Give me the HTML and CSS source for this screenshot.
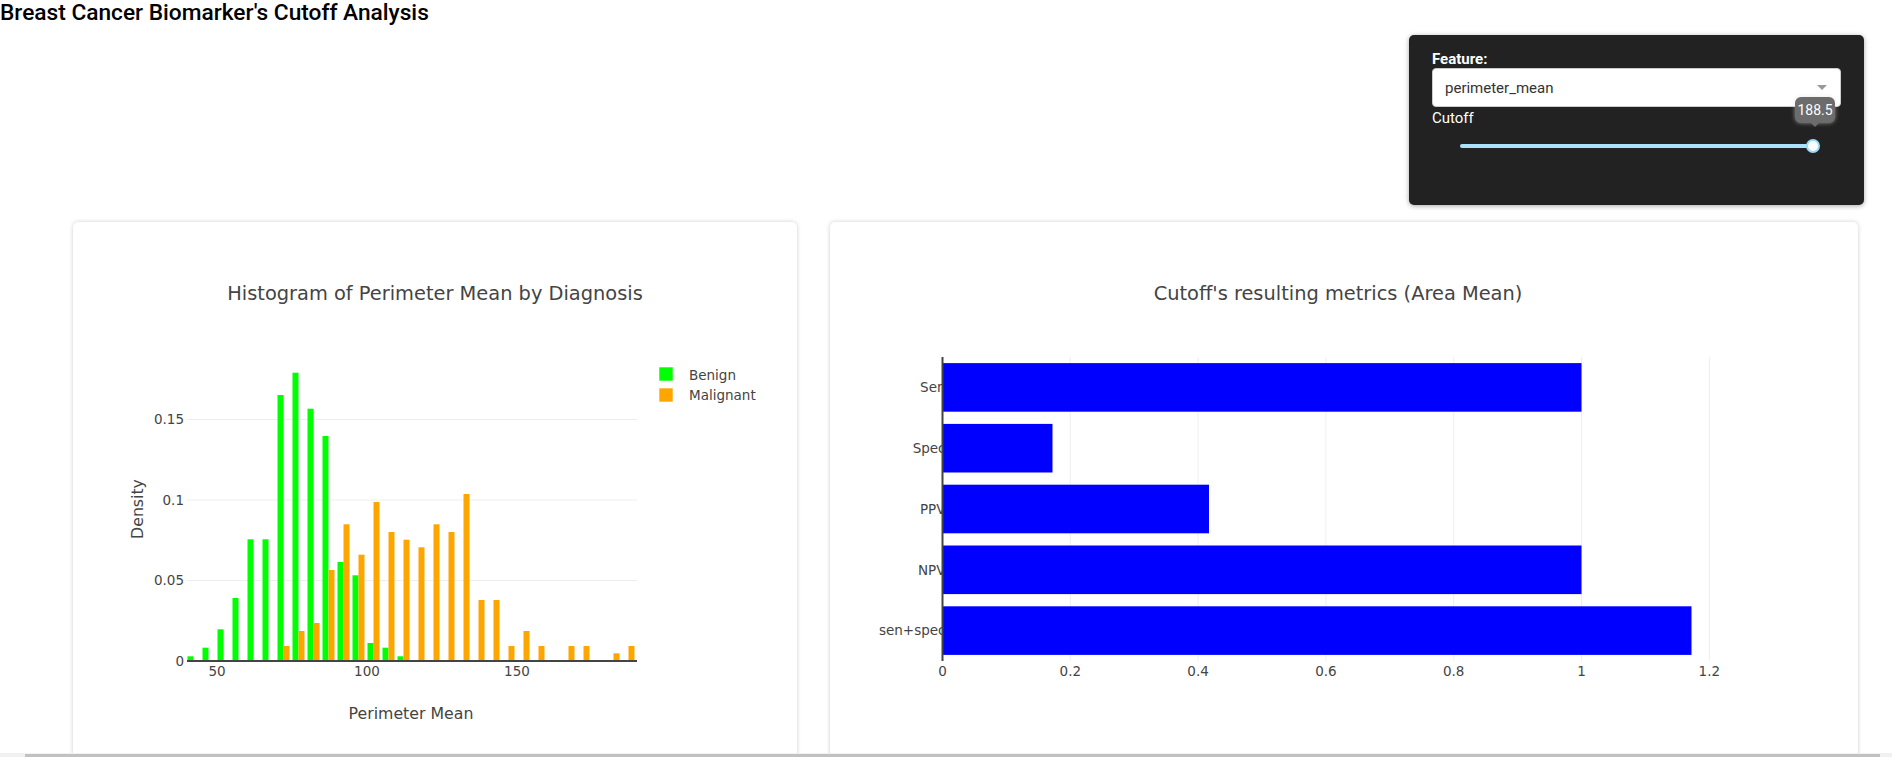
FILE: index.html
```html
<!DOCTYPE html>
<html lang="en">
<head>
<meta charset="utf-8">
<title>Breast Cancer Biomarker's Cutoff Analysis</title>
<link rel="stylesheet" href="styles.css">
</head>
<body>
<div class="app">
  <h1 class="page-title">Breast Cancer Biomarker's Cutoff Analysis</h1>

  <div class="controls-row">
    <div class="control-panel">
      <label class="ctl-label">Feature:</label>
      <div class="select">
        <span class="select-value">perimeter_mean</span>
        <span class="select-arrow"></span>
      </div>
      <div class="ctl-label-plain">Cutoff</div>
      <div class="slider">
        <div class="slider-handle">
          <div class="slider-tip">188.5</div>
        </div>
      </div>
    </div>
  </div>

  <div class="cards">
    <div class="card card-left">
      <svg class="chart" viewBox="0 0 724 540" width="724" height="540">
        <text class="chart-title" x="362" y="78" text-anchor="middle">Histogram of Perimeter Mean by Diagnosis</text>
        <g class="grid">
          <line x1="114" x2="564" y1="358.5" y2="358.5"/>
          <line x1="114" x2="564" y1="278" y2="278"/>
          <line x1="114" x2="564" y1="197.5" y2="197.5"/>
        </g>
        <g class="benign">
          <rect x="114.5" y="434.3" width="6" height="4.7"/>
          <rect x="129.5" y="425.7" width="6" height="13.3"/>
          <rect x="144.5" y="407.3" width="6" height="31.7"/>
          <rect x="159.5" y="376" width="6" height="63"/>
          <rect x="174.5" y="317.3" width="6" height="121.7"/>
          <rect x="189.5" y="317.3" width="6" height="121.7"/>
          <rect x="204.5" y="173" width="6" height="266"/>
          <rect x="219.5" y="150.7" width="6" height="288.3"/>
          <rect x="234.5" y="186.7" width="6" height="252.3"/>
          <rect x="249.5" y="214" width="6" height="225"/>
          <rect x="264.5" y="340" width="6" height="99"/>
          <rect x="279.5" y="353.3" width="6" height="85.7"/>
          <rect x="294.5" y="421" width="6" height="18"/>
          <rect x="309.5" y="425.7" width="6" height="13.3"/>
          <rect x="324.5" y="434.3" width="6" height="4.7"/>
        </g>
        <g class="malignant">
          <rect x="210.5" y="424" width="6" height="15"/>
          <rect x="225.5" y="409" width="6" height="30"/>
          <rect x="240.5" y="401" width="6" height="38"/>
          <rect x="255.5" y="348" width="6" height="91"/>
          <rect x="270.5" y="302.3" width="6" height="136.7"/>
          <rect x="285.5" y="332.7" width="6" height="106.3"/>
          <rect x="300.5" y="280" width="6" height="159"/>
          <rect x="315.5" y="310" width="6" height="129"/>
          <rect x="330.5" y="317.7" width="6" height="121.3"/>
          <rect x="345.5" y="325.3" width="6" height="113.7"/>
          <rect x="360.5" y="302.3" width="6" height="136.7"/>
          <rect x="375.5" y="310" width="6" height="129"/>
          <rect x="390.5" y="272" width="6" height="167"/>
          <rect x="405.5" y="378" width="6" height="61"/>
          <rect x="420.5" y="378" width="6" height="61"/>
          <rect x="435.5" y="424" width="6" height="15"/>
          <rect x="450.5" y="409" width="6" height="30"/>
          <rect x="465.5" y="424" width="6" height="15"/>
          <rect x="495.5" y="424" width="6" height="15"/>
          <rect x="510.5" y="424" width="6" height="15"/>
          <rect x="540.5" y="431.3" width="6" height="7.7"/>
          <rect x="555.5" y="424" width="6" height="15"/>
        </g>
        <line class="axis-line" x1="114" x2="564" y1="439" y2="439"/>
        <g class="tick" text-anchor="end">
          <text x="111" y="443.7">0</text>
          <text x="111" y="363.2">0.05</text>
          <text x="111" y="282.7">0.1</text>
          <text x="111" y="202.2">0.15</text>
        </g>
        <g class="tick" text-anchor="middle">
          <text x="144" y="453.5">50</text>
          <text x="294" y="453.5">100</text>
          <text x="444" y="453.5">150</text>
        </g>
        <text class="axis-title" x="338" y="496.5" text-anchor="middle">Perimeter Mean</text>
        <text class="axis-title" transform="translate(70,287) rotate(-90)" text-anchor="middle">Density</text>
        <g class="legend">
          <rect class="lg-benign" x="586.3" y="145.3" width="13.4" height="13.4"/>
          <text x="616" y="158">Benign</text>
          <rect class="lg-malignant" x="586.3" y="166.3" width="13.4" height="13.4"/>
          <text x="616" y="178">Malignant</text>
        </g>
      </svg>
    </div>

    <div class="card card-right">
      <svg class="chart" viewBox="0 0 1028 540" width="1028" height="540">
        <text class="chart-title" x="508" y="78" text-anchor="middle">Cutoff's resulting metrics (Area Mean)</text>
        <g class="grid">
          <line x1="240.3" x2="240.3" y1="135" y2="439"/>
          <line x1="368.1" x2="368.1" y1="135" y2="439"/>
          <line x1="495.9" x2="495.9" y1="135" y2="439"/>
          <line x1="623.7" x2="623.7" y1="135" y2="439"/>
          <line x1="751.5" x2="751.5" y1="135" y2="439"/>
          <line x1="879.3" x2="879.3" y1="135" y2="439"/>
        </g>
        <g class="tick" text-anchor="end">
          <text x="115.5" y="170.1">Sen</text>
          <text x="115.5" y="230.9">Spec</text>
          <text x="115.5" y="291.7">PPV</text>
          <text x="115.5" y="352.5">NPV</text>
          <text x="115.5" y="413.3">sen+spec</text>
        </g>
        <g class="metric-bars">
          <rect x="112.5" y="141.1" width="639" height="48.6"/>
          <rect x="112.5" y="201.9" width="110" height="48.6"/>
          <rect x="112.5" y="262.7" width="266.5" height="48.6"/>
          <rect x="112.5" y="323.5" width="639" height="48.6"/>
          <rect x="112.5" y="384.3" width="749" height="48.6"/>
        </g>
        <line class="axis-line" x1="112.5" x2="112.5" y1="135" y2="439"/>
        <g class="tick" text-anchor="middle">
          <text x="112.5" y="454.4">0</text>
          <text x="240.3" y="454.4">0.2</text>
          <text x="368.1" y="454.4">0.4</text>
          <text x="495.9" y="454.4">0.6</text>
          <text x="623.7" y="454.4">0.8</text>
          <text x="751.5" y="454.4">1</text>
          <text x="879.3" y="454.4">1.2</text>
        </g>
      </svg>
    </div>
  </div>
</div>

<div class="hscroll"><div class="hscroll-thumb"></div></div>
</body>
</html>
```

FILE: styles.css
```css
html, body {
  margin: 0;
  padding: 0;
  overflow: hidden;
  background: #fff;
}

body {
  font-family: Roboto, "Liberation Sans", Arial, sans-serif;
}

.page-title {
  margin: 0;
  font-size: 22.7px;
  line-height: 25px;
  font-weight: 500;
  color: #000;
}

.controls-row {
  display: flex;
  justify-content: flex-end;
  padding-right: 28px;
  margin-top: 10px;
}

.control-panel {
  width: 455px;
  height: 170px;
  box-sizing: border-box;
  padding: 15px 23px;
  background: #222;
  border-radius: 5px;
  box-shadow: 0 1px 5px rgba(0, 0, 0, 0.35);
  color: #fff;
}

.ctl-label {
  display: block;
  font-size: 15px;
  line-height: 18px;
  font-weight: 700;
}

.select {
  position: relative;
  height: 39px;
  box-sizing: border-box;
  display: flex;
  align-items: center;
  padding-left: 12px;
  background: #fff;
  border: 1px solid #ccc;
  border-radius: 4px;
  color: #333;
  font-size: 15px;
}

.select-arrow {
  position: absolute;
  right: 13px;
  top: 16px;
  width: 0;
  height: 0;
  border-top: 5px solid #999;
  border-left: 5px solid transparent;
  border-right: 5px solid transparent;
}

.ctl-label-plain {
  margin-top: 2px;
  font-size: 15px;
  line-height: 18px;
}

.slider {
  position: relative;
  margin: 17px 28px 0;
  height: 4px;
  border-radius: 2px;
  background: #abe2fb;
}

.slider-handle {
  position: absolute;
  right: -7px;
  top: -5px;
  width: 14px;
  height: 14px;
  box-sizing: border-box;
  border: 2px solid #96dbfa;
  border-radius: 50%;
  background: #fff;
}

.slider-tip {
  position: absolute;
  left: -13px;
  bottom: 28px;
  width: 40px;
  box-sizing: border-box;
  padding: 4px 0;
  text-align: center;
  font-size: 14px;
  line-height: 18px;
  color: #fff;
  background: #6c6c6c;
  border-radius: 6px;
  box-shadow: 0 0 4px rgba(217, 217, 217, 0.6);
}

.slider-tip::after {
  content: "";
  position: absolute;
  left: 50%;
  bottom: -4px;
  margin-left: -4px;
  border-top: 4px solid #6c6c6c;
  border-left: 4px solid transparent;
  border-right: 4px solid transparent;
}

.cards {
  display: flex;
  gap: 33px;
  padding: 0 34px 0 73px;
  margin-top: 17px;
}

.card {
  height: 560px;
  background: #fff;
  border-radius: 5px;
  box-shadow: 0 0 4px rgba(0, 0, 0, 0.2);
}

.card-left {
  flex: 0 0 724px;
}

.card-right {
  flex: 1 1 auto;
}

.chart {
  display: block;
  font-family: "DejaVu Sans", Verdana, sans-serif;
}

.chart-title {
  font-size: 19.4px;
  fill: #444;
}

.grid line {
  stroke: #eee;
  stroke-width: 1;
}

.benign rect,
.lg-benign {
  fill: #00ff00;
}

.malignant rect,
.lg-malignant {
  fill: #ffa500;
}

.metric-bars rect {
  fill: #0000ff;
}

.axis-line {
  stroke: #444;
  stroke-width: 2;
}

.tick text {
  font-size: 13.5px;
  fill: #444;
}

.axis-title {
  font-size: 15.75px;
  fill: #444;
}

.legend text {
  font-size: 13.5px;
  fill: #444;
}

.hscroll {
  position: fixed;
  left: 0;
  right: 0;
  bottom: 0;
  height: 4px;
  background: #f1f1f1;
}

.hscroll-thumb {
  position: absolute;
  left: 25px;
  right: 12px;
  top: 1px;
  height: 3px;
  background: #c1c1c1;
}
```
